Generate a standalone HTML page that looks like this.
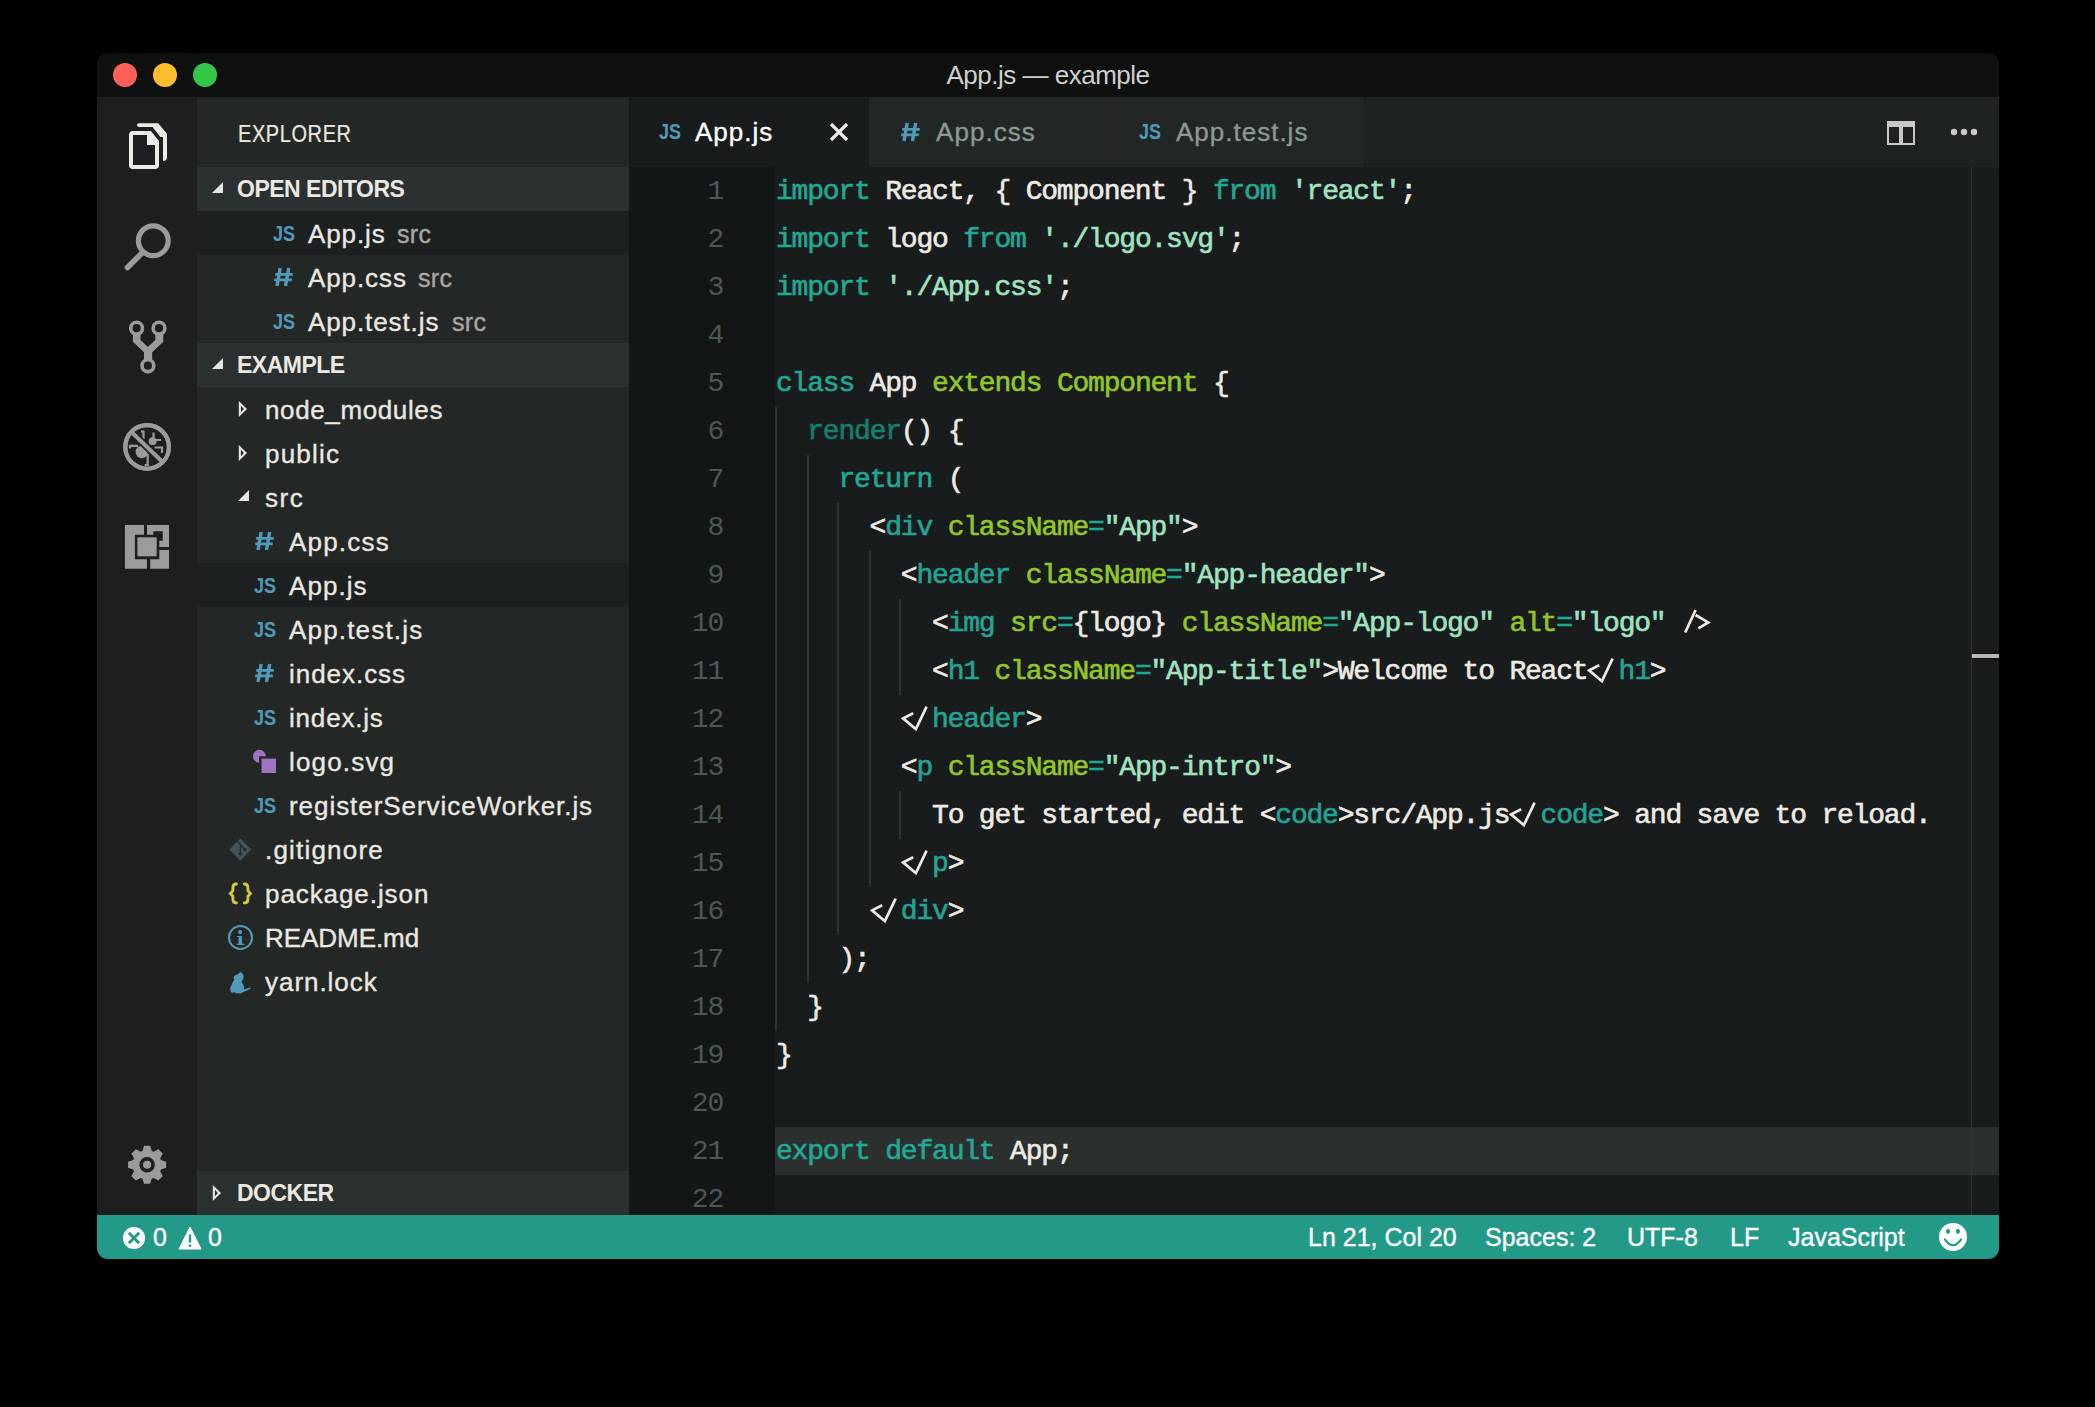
<!DOCTYPE html><html><head><meta charset="utf-8"><style>
*{margin:0;padding:0;box-sizing:border-box}
html,body{width:2095px;height:1407px;background:#000;overflow:hidden}
body{position:relative;font-family:"Liberation Sans",sans-serif;}
.a{position:absolute}
#win{position:absolute;left:0;top:0;width:2095px;height:1407px;clip-path:inset(53px 96px 148px 97px round 11px);background:#191c1c}
.ln{position:absolute;left:629px;width:94px;text-align:right;font-family:"Liberation Mono",monospace;font-size:28px;letter-spacing:-1.2px;line-height:48px;height:48px;color:#4d5856;white-space:pre}
.cl{position:absolute;left:776px;font-family:"Liberation Mono",monospace;font-size:28px;line-height:48px;height:48px;white-space:pre;color:#efebe5;letter-spacing:-1.2px;-webkit-text-stroke-width:0.6px}
.kw{color:#22a896} .tag{color:#25a394} .attr{color:#93c62a} .eq{color:#1fa894} .str{color:#a0e4c2} .cls{color:#93c62a} .fn{color:#157f6e}
.gd{position:absolute;width:2px;background:#2d3533}
.si{position:absolute;height:44px;line-height:46px;font-size:26px;color:#ece8e2;white-space:pre;letter-spacing:0.5px;-webkit-text-stroke-width:0.35px}
.desc{font-size:25px;color:#a8a8a6;letter-spacing:0.3px}
.sh{position:absolute;left:197px;width:432px;height:44px;background:#2b3030}
.sht{position:absolute;left:237px;height:44px;line-height:44px;font-size:23px;font-weight:bold;color:#ece8e2;letter-spacing:-0.5px}
.ic{position:absolute;font-weight:bold;color:#519aba;}
.st{position:absolute;top:1215px;height:44px;line-height:44px;font-size:25px;color:#fff;white-space:pre;-webkit-text-stroke-width:0.35px}
</style></head><body><div id="win">
<div class="a" style="left:0;top:53px;width:2095px;height:44px;background:#0e100f"></div>
<div class="a" style="left:113px;top:63px;width:24px;height:24px;border-radius:50%;background:#fe5f57"></div>
<div class="a" style="left:153px;top:63px;width:24px;height:24px;border-radius:50%;background:#febc2e"></div>
<div class="a" style="left:193px;top:63px;width:24px;height:24px;border-radius:50%;background:#33c748"></div>
<div class="a" style="left:848px;width:400px;top:53px;height:44px;line-height:44px;text-align:center;font-size:26px;color:#cfcfcf;letter-spacing:-0.5px">App.js — example</div>
<div class="a" style="left:97px;top:97px;width:100px;height:1118px;background:#1c1f1e"></div>
<div class="a" style="left:197px;top:97px;width:432px;height:1118px;background:#232827"></div>
<div class="a" style="left:629px;top:97px;width:1370px;height:70px;background:#1e2221"></div>
<div class="a" style="left:629px;top:167px;width:146px;height:1048px;background:#121616"></div>
<div class="a" style="left:775px;top:1127px;width:1224px;height:48px;background:#2b302f"></div>
<div class="a" style="left:1971px;top:167px;width:1px;height:1048px;background:#303534"></div>
<div class="a" style="left:1972px;top:653px;width:27px;height:6px;background:#0d0f0f"></div>
<div class="a" style="left:1972px;top:654px;width:27px;height:4px;background:#b9bab2"></div>
<div class="a" style="left:0;top:1215px;width:2095px;height:44px;background:#239a88"></div>
<svg class="a" style="left:107px;top:107px" width="80" height="80" viewBox="0 0 80 80"><path fill="#eceae4" fill-rule="evenodd" d="M26,24 H44 L52,34 V58 Q52,62 48,62 H26 Q22,62 22,58 V28 Q22,24 26,24 Z M26,28 V58 H48 V38 H40 V28 Z"/><path fill="#eceae4" d="M32,16.2 H51.2 L60,26.7 V50 Q60,54 56,54 V30.1 H53.4 L45.5,19.9 H32 Q30,19.9 30,18 Q30,16.2 32,16.2 Z"/></svg>
<svg class="a" style="left:107px;top:206px" width="80" height="80" viewBox="0 0 80 80"><circle cx="46.3" cy="34.7" r="14.9" fill="none" stroke="#9b9b99" stroke-width="5.2"/><line x1="20.5" y1="61.5" x2="35" y2="47" stroke="#9b9b99" stroke-width="5.6" stroke-linecap="round"/></svg>
<svg class="a" style="left:107px;top:306px" width="80" height="80" viewBox="0 0 80 80"><path fill="#9b9b99" d="M25.9,27.9 H33.5 V33.9 L40.9,40.9 L48.3,33.9 V27.9 H56.3 V35.7 L45.2,46.2 V53.4 H37 V46.2 L25.9,35.7 Z"/><circle cx="29.6" cy="22.2" r="5.9" fill="#1c1f1e" stroke="#9b9b99" stroke-width="3.6"/><circle cx="52" cy="22.2" r="5.9" fill="#1c1f1e" stroke="#9b9b99" stroke-width="3.6"/><circle cx="40.9" cy="59.7" r="5.9" fill="#1c1f1e" stroke="#9b9b99" stroke-width="3.6"/></svg>
<svg class="a" style="left:107px;top:406px" width="80" height="80" viewBox="0 0 80 80"><circle cx="40.1" cy="40.9" r="21.8" fill="none" stroke="#9b9b99" stroke-width="4.1"/><circle cx="34.8" cy="46" r="6.2" fill="#9b9b99"/><circle cx="45.6" cy="35.2" r="3.9" fill="#9b9b99"/><path fill="none" stroke="#9b9b99" stroke-width="2.2" d="M23,42.6 V39.8 H31 M40.7,48 V59 H37.7 M34,25.5 H36.5 V33 M46.5,26.5 V32 M48.5,34 H54 M47.5,41.5 H55 V47"/><line x1="25.5" y1="27" x2="54.5" y2="55" stroke="#1c1f1e" stroke-width="7.5"/><line x1="25.2" y1="26.7" x2="54.8" y2="55.3" stroke="#9b9b99" stroke-width="4"/><circle cx="40.1" cy="40.9" r="21.8" fill="none" stroke="#9b9b99" stroke-width="4.1"/></svg>
<svg class="a" style="left:107px;top:506px" width="80" height="80" viewBox="0 0 80 80"><path fill="#9b9b99" d="M17.9,19 H37 V28.7 H27.9 V53.2 H40 V62.8 H17.9 Z"/><path fill="#9b9b99" d="M40,19 H62 V40.9 H52.3 V34.7 H55.7 V25.3 H46.3 V28.7 H40 Z"/><path fill="#9b9b99" d="M52.3,44.1 H62 V62.8 H43.2 V53.2 H52.3 Z"/><rect x="30.4" y="31.3" width="19.3" height="19" fill="#9b9b99"/></svg>
<svg class="a" style="left:107px;top:1125px" width="80" height="80" viewBox="0 0 80 80"><path fill="#9b9b99" d="M35.35,26.00 L37.08,20.74 L43.12,20.74 L44.85,26.00 L46.50,26.68 L51.44,24.19 L55.71,28.46 L53.22,33.40 L53.90,35.05 L59.16,36.78 L59.16,42.82 L53.90,44.55 L53.22,46.20 L55.71,51.14 L51.44,55.41 L46.50,52.92 L44.85,53.60 L43.12,58.86 L37.08,58.86 L35.35,53.60 L33.70,52.92 L28.76,55.41 L24.49,51.14 L26.98,46.20 L26.30,44.55 L21.04,42.82 L21.04,36.78 L26.30,35.05 L26.98,33.40 L24.49,28.46 L28.76,24.19 L33.70,26.68Z"/><circle cx="40.1" cy="39.8" r="5.9" fill="none" stroke="#1c1f1e" stroke-width="3.7"/></svg>
<div class="a" style="left:238px;top:99px;height:70px;line-height:70px;font-size:23px;color:#ece8e2;letter-spacing:0.7px;transform:scaleX(0.868);transform-origin:0 0;-webkit-text-stroke-width:0.2px">EXPLORER</div>
<div class="sh" style="top:167px"></div>
<svg class="a" style="left:205px;top:167px" width="30" height="44" viewBox="0 0 30 44"><path fill="#e6e6e6" d="M7,26 L18,15 V26 Z"/></svg>
<div class="sht" style="top:167px">OPEN EDITORS</div>
<div class="sh" style="top:343px"></div>
<svg class="a" style="left:205px;top:343px" width="30" height="44" viewBox="0 0 30 44"><path fill="#e6e6e6" d="M7,26 L18,15 V26 Z"/></svg>
<div class="sht" style="top:343px">EXAMPLE</div>
<div class="sh" style="top:1171px"></div>
<svg class="a" style="left:205px;top:1171px" width="30" height="44" viewBox="0 0 30 44"><path fill="#e6e6e6" fill-rule="evenodd" d="M7.8,14 L16,22 L7.8,30 Z M9.9,18.7 L12.9,22 L9.9,25.3 Z"/></svg>
<div class="sht" style="top:1171px">DOCKER</div>
<div class="a" style="left:197px;top:211px;width:432px;height:44px;background:#1c2020"></div>
<div class="a" style="left:197px;top:563px;width:432px;height:44px;background:#1c2020"></div>
<svg class="a" style="left:272px;top:211px" width="28" height="44" viewBox="0 0 28 44"><text x="1" y="30" font-family="Liberation Sans" font-weight="bold" font-size="21.8" fill="#519aba" textLength="22" lengthAdjust="spacingAndGlyphs">JS</text></svg>
<div class="si" style="left:308px;top:211px;letter-spacing:0.9px">App.js</div>
<div class="si desc" style="left:397px;top:211px">src</div>
<svg class="a" style="left:272px;top:265.5px" width="24" height="22" viewBox="0 0 24 22"><g transform="translate(2,2)"><path stroke="#519aba" fill="none" stroke-width="3.4" d="M6.2,0 L3,18 M14.7,0 L11.5,18"/><path stroke="#519aba" fill="none" stroke-width="2.7" d="M1.2,6.3 H18.8 M0.2,11.8 H17.8"/></g></svg>
<div class="si" style="left:308px;top:255px;letter-spacing:0.9px">App.css</div>
<div class="si desc" style="left:418px;top:255px">src</div>
<svg class="a" style="left:272px;top:299px" width="28" height="44" viewBox="0 0 28 44"><text x="1" y="30" font-family="Liberation Sans" font-weight="bold" font-size="21.8" fill="#519aba" textLength="22" lengthAdjust="spacingAndGlyphs">JS</text></svg>
<div class="si" style="left:308px;top:299px;letter-spacing:0.9px">App.test.js</div>
<div class="si desc" style="left:452px;top:299px">src</div>
<svg class="a" style="left:233px;top:387px" width="20" height="44" viewBox="0 0 20 44"><path fill="#e6e6e6" fill-rule="evenodd" d="M5.8,14 L14,22 L5.8,30 Z M7.9,18.7 L10.9,22 L7.9,25.3 Z"/></svg>
<div class="si" style="left:265px;top:387px;letter-spacing:0.62px">node_modules</div>
<svg class="a" style="left:233px;top:431px" width="20" height="44" viewBox="0 0 20 44"><path fill="#e6e6e6" fill-rule="evenodd" d="M5.8,14 L14,22 L5.8,30 Z M7.9,18.7 L10.9,22 L7.9,25.3 Z"/></svg>
<div class="si" style="left:265px;top:431px;letter-spacing:1.2px">public</div>
<svg class="a" style="left:233px;top:475px" width="20" height="44" viewBox="0 0 20 44"><path fill="#e6e6e6" d="M5,26 L16,15 V26 Z"/></svg>
<div class="si" style="left:265px;top:475px;letter-spacing:1.5px">src</div>
<svg class="a" style="left:253px;top:529.5px" width="24" height="22" viewBox="0 0 24 22"><g transform="translate(2,2)"><path stroke="#519aba" fill="none" stroke-width="3.4" d="M6.2,0 L3,18 M14.7,0 L11.5,18"/><path stroke="#519aba" fill="none" stroke-width="2.7" d="M1.2,6.3 H18.8 M0.2,11.8 H17.8"/></g></svg>
<div class="si" style="left:289px;top:519px;letter-spacing:1.2px">App.css</div>
<svg class="a" style="left:253px;top:563px" width="28" height="44" viewBox="0 0 28 44"><text x="1" y="30" font-family="Liberation Sans" font-weight="bold" font-size="21.8" fill="#519aba" textLength="22" lengthAdjust="spacingAndGlyphs">JS</text></svg>
<div class="si" style="left:289px;top:563px;letter-spacing:1.04px">App.js</div>
<svg class="a" style="left:253px;top:607px" width="28" height="44" viewBox="0 0 28 44"><text x="1" y="30" font-family="Liberation Sans" font-weight="bold" font-size="21.8" fill="#519aba" textLength="22" lengthAdjust="spacingAndGlyphs">JS</text></svg>
<div class="si" style="left:289px;top:607px;letter-spacing:1.18px">App.test.js</div>
<svg class="a" style="left:253px;top:661.5px" width="24" height="22" viewBox="0 0 24 22"><g transform="translate(2,2)"><path stroke="#519aba" fill="none" stroke-width="3.4" d="M6.2,0 L3,18 M14.7,0 L11.5,18"/><path stroke="#519aba" fill="none" stroke-width="2.7" d="M1.2,6.3 H18.8 M0.2,11.8 H17.8"/></g></svg>
<div class="si" style="left:289px;top:651px;letter-spacing:0.96px">index.css</div>
<svg class="a" style="left:253px;top:695px" width="28" height="44" viewBox="0 0 28 44"><text x="1" y="30" font-family="Liberation Sans" font-weight="bold" font-size="21.8" fill="#519aba" textLength="22" lengthAdjust="spacingAndGlyphs">JS</text></svg>
<div class="si" style="left:289px;top:695px;letter-spacing:0.81px">index.js</div>
<svg class="a" style="left:245px;top:739px" width="40" height="44" viewBox="0 0 40 44"><path fill="#a074c4" d="M14.4,17.3 m-6.45,0 a6.45,6.45 0 1,1 12.9,0 H14.1 V23.75 A6.45,6.45 0 0,1 7.95,17.3 Z"/><rect x="16.5" y="19.6" width="14.5" height="14.4" fill="#a074c4"/></svg>
<div class="si" style="left:289px;top:739px;letter-spacing:1.17px">logo.svg</div>
<svg class="a" style="left:253px;top:783px" width="28" height="44" viewBox="0 0 28 44"><text x="1" y="30" font-family="Liberation Sans" font-weight="bold" font-size="21.8" fill="#519aba" textLength="22" lengthAdjust="spacingAndGlyphs">JS</text></svg>
<div class="si" style="left:289px;top:783px;letter-spacing:0.95px">registerServiceWorker.js</div>
<svg class="a" style="left:220px;top:827px" width="40" height="44" viewBox="0 0 40 44"><path fill="#41535b" stroke="#41535b" stroke-width="1.6" stroke-linejoin="round" d="M20.3,12.5 L30.3,22.5 L20.3,32.5 L10.3,22.5 Z"/><path fill="none" stroke="#232827" stroke-width="1.3" d="M16.6,13.6 L25,22.4 M20.7,17.9 L20.3,27"/><circle cx="25" cy="22.5" r="1.7" fill="#232827"/><circle cx="20.3" cy="27" r="1.6" fill="#232827"/></svg>
<div class="si" style="left:265px;top:827px;letter-spacing:1.2px">.gitignore</div>
<svg class="a" style="left:220px;top:871px" width="40" height="44" viewBox="0 0 40 44"><path fill="none" stroke="#cfcd3f" stroke-width="2.8" stroke-linecap="round" d="M16.5,13 Q12.9,13 12.9,16.5 V19.8 L10.4,22.5 L12.9,25.2 V28.5 Q12.9,32 16.5,32"/><path fill="none" stroke="#cfcd3f" stroke-width="2.8" stroke-linecap="round" d="M24.3,13 Q27.9,13 27.9,16.5 V19.8 L30.4,22.5 L27.9,25.2 V28.5 Q27.9,32 24.3,32"/></svg>
<div class="si" style="left:265px;top:871px;letter-spacing:0.92px">package.json</div>
<svg class="a" style="left:220px;top:915px" width="40" height="44" viewBox="0 0 40 44"><circle cx="20.5" cy="22.5" r="11.5" fill="none" stroke="#519aba" stroke-width="2.1"/><circle cx="20.1" cy="17.1" r="2.05" fill="#519aba"/><path fill="#519aba" d="M16.8,20.9 H22 V28.7 H24.2 V30.1 H16.8 V28.7 H18.6 V21.9 H16.8 Z"/></svg>
<div class="si" style="left:265px;top:915px;letter-spacing:-0.05px">README.md</div>
<svg class="a" style="left:220px;top:959px" width="40" height="44" viewBox="0 0 40 44"><path fill="#519aba" transform="translate(0,2)" d="M20.5,10.8 L23.3,13.4 L23.6,17.1 L21.6,21 L23.6,24.2 L24.2,28.4 L29.9,26.4 L31,27.4 L24.2,30.7 L20.5,32.4 L15.4,32.1 L14.2,31 L13.4,31.8 L10.8,31.3 L10.1,27.3 L12.2,22.2 L14.2,18.8 L13.6,16.5 L14.5,14.8 L18.5,12.8 Z"/></svg>
<div class="si" style="left:265px;top:959px;letter-spacing:0.96px">yarn.lock</div>
<div class="a" style="left:629px;top:97px;width:240px;height:70px;background:#191c1c"></div>
<div class="a" style="left:869px;top:97px;width:239px;height:70px;background:#222726"></div>
<div class="a" style="left:1109px;top:97px;width:255px;height:70px;background:#222726"></div>
<div class="a" style="left:1108px;top:97px;width:1px;height:70px;background:#262222"></div>
<div class="a" style="left:1364px;top:97px;width:1px;height:70px;background:#1c1f1f"></div>
<svg class="a" style="left:658px;top:109px" width="28" height="44" viewBox="0 0 28 44"><text x="1" y="30" font-family="Liberation Sans" font-weight="bold" font-size="21.8" fill="#519aba" textLength="22" lengthAdjust="spacingAndGlyphs">JS</text></svg>
<div class="a" style="left:695px;top:97px;height:70px;line-height:70px;font-size:26px;color:#ffffff;letter-spacing:1.0px;-webkit-text-stroke-width:0.35px">App.js</div>
<svg class="a" style="left:826px;top:119px" width="26" height="26" viewBox="0 0 26 26"><path d="M5,5 L21,21 M21,5 L5,21" stroke="#eaeaea" stroke-width="3.2"/></svg>
<svg class="a" style="left:899.2px;top:120.5px" width="24" height="22" viewBox="0 0 24 22"><g transform="translate(2,2)"><path stroke="#519aba" fill="none" stroke-width="3.4" d="M6.2,0 L3,18 M14.7,0 L11.5,18"/><path stroke="#519aba" fill="none" stroke-width="2.7" d="M1.2,6.3 H18.8 M0.2,11.8 H17.8"/></g></svg>
<div class="a" style="left:936px;top:97px;height:70px;line-height:70px;font-size:26px;color:#8b9993;letter-spacing:1.05px;-webkit-text-stroke-width:0.35px">App.css</div>
<svg class="a" style="left:1138px;top:109px" width="28" height="44" viewBox="0 0 28 44"><text x="1" y="30" font-family="Liberation Sans" font-weight="bold" font-size="21.8" fill="#519aba" textLength="22" lengthAdjust="spacingAndGlyphs">JS</text></svg>
<div class="a" style="left:1176px;top:97px;height:70px;line-height:70px;font-size:26px;color:#8b9993;letter-spacing:1.0px;-webkit-text-stroke-width:0.35px">App.test.js</div>
<svg class="a" style="left:1887px;top:121px" width="28" height="24" viewBox="0 0 28 24"><path fill="#c8c8c8" fill-rule="evenodd" d="M0,0 H28 V24 H0 Z M2,6 V22 H12 V6 Z M16,6 V22 H26 V6 Z"/></svg>
<svg class="a" style="left:1945px;top:125px" width="36" height="14" viewBox="0 0 36 14"><circle cx="9" cy="7" r="3.2" fill="#c8c8c8"/><circle cx="19" cy="7" r="3.2" fill="#c8c8c8"/><circle cx="29" cy="7" r="3.2" fill="#c8c8c8"/></svg>
<div class="gd" style="left:775px;top:407px;height:624px"></div>
<div class="gd" style="left:807px;top:455px;height:528px"></div>
<div class="gd" style="left:837px;top:503px;height:432px"></div>
<div class="gd" style="left:869px;top:551px;height:336px"></div>
<div class="gd" style="left:899px;top:599px;height:96px"></div>
<div class="gd" style="left:899px;top:791px;height:48px"></div>
<div class="ln" style="top:168px">1</div>
<div class="cl" style="top:168px"><span class="kw">import</span> React, { Component } <span class="kw">from</span> <span class="str">'react'</span>;</div>
<div class="ln" style="top:216px">2</div>
<div class="cl" style="top:216px"><span class="kw">import</span> logo <span class="kw">from</span> <span class="str">'./logo.svg'</span>;</div>
<div class="ln" style="top:264px">3</div>
<div class="cl" style="top:264px"><span class="kw">import</span> <span class="str">'./App.css'</span>;</div>
<div class="ln" style="top:312px">4</div>
<div class="ln" style="top:360px">5</div>
<div class="cl" style="top:360px"><span class="kw">class</span> App <span class="cls">extends</span> <span class="cls">Component</span> {</div>
<div class="ln" style="top:408px">6</div>
<div class="cl" style="top:408px">  <span class="fn">render</span>() {</div>
<div class="ln" style="top:456px">7</div>
<div class="cl" style="top:456px">    <span class="kw">return</span> (</div>
<div class="ln" style="top:504px">8</div>
<div class="cl" style="top:504px">      &lt;<span class="tag">div</span> <span class="attr">className</span><span class="eq">=</span><span class="str">"App"</span>&gt;</div>
<div class="ln" style="top:552px">9</div>
<div class="cl" style="top:552px">        &lt;<span class="tag">header</span> <span class="attr">className</span><span class="eq">=</span><span class="str">"App-header"</span>&gt;</div>
<div class="ln" style="top:600px">10</div>
<div class="cl" style="top:600px">          &lt;<span class="tag">img</span> <span class="attr">src</span><span class="eq">=</span>{logo} <span class="attr">className</span><span class="eq">=</span><span class="str">"App-logo"</span> <span class="attr">alt</span><span class="eq">=</span><span class="str">"logo"</span> <span style="display:inline-block;width:31.2px;height:48px;vertical-align:top;position:relative"><svg style="position:absolute;left:0;top:-1px" width="32" height="48" viewBox="0 0 32 48"><path fill="none" stroke="#efebe5" stroke-width="2.7" stroke-linejoin="miter" stroke-linecap="butt" d="M4.2,33.5 L14.6,11 M14.6,16 L27.2,23.4 L17.4,29.3"/></svg></span></div>
<div class="ln" style="top:648px">11</div>
<div class="cl" style="top:648px">          &lt;<span class="tag">h1</span> <span class="attr">className</span><span class="eq">=</span><span class="str">"App-title"</span>&gt;Welcome to React<span style="display:inline-block;width:31.2px;height:48px;vertical-align:top;position:relative"><svg style="position:absolute;left:0;top:-1px" width="32" height="48" viewBox="0 0 32 48"><path fill="none" stroke="#efebe5" stroke-width="2.7" stroke-linejoin="miter" stroke-linecap="butt" d="M12.2,18.2 L2.1,23.4 L14.9,34.2 L25.6,11.6"/></svg></span><span class="tag">h1</span>&gt;</div>
<div class="ln" style="top:696px">12</div>
<div class="cl" style="top:696px">        <span style="display:inline-block;width:31.2px;height:48px;vertical-align:top;position:relative"><svg style="position:absolute;left:0;top:-1px" width="32" height="48" viewBox="0 0 32 48"><path fill="none" stroke="#efebe5" stroke-width="2.7" stroke-linejoin="miter" stroke-linecap="butt" d="M12.2,18.2 L2.1,23.4 L14.9,34.2 L25.6,11.6"/></svg></span><span class="tag">header</span>&gt;</div>
<div class="ln" style="top:744px">13</div>
<div class="cl" style="top:744px">        &lt;<span class="tag">p</span> <span class="attr">className</span><span class="eq">=</span><span class="str">"App-intro"</span>&gt;</div>
<div class="ln" style="top:792px">14</div>
<div class="cl" style="top:792px">          To get started, edit &lt;<span class="tag">code</span>&gt;src/App.js<span style="display:inline-block;width:31.2px;height:48px;vertical-align:top;position:relative"><svg style="position:absolute;left:0;top:-1px" width="32" height="48" viewBox="0 0 32 48"><path fill="none" stroke="#efebe5" stroke-width="2.7" stroke-linejoin="miter" stroke-linecap="butt" d="M12.2,18.2 L2.1,23.4 L14.9,34.2 L25.6,11.6"/></svg></span><span class="tag">code</span>&gt; and save to reload.</div>
<div class="ln" style="top:840px">15</div>
<div class="cl" style="top:840px">        <span style="display:inline-block;width:31.2px;height:48px;vertical-align:top;position:relative"><svg style="position:absolute;left:0;top:-1px" width="32" height="48" viewBox="0 0 32 48"><path fill="none" stroke="#efebe5" stroke-width="2.7" stroke-linejoin="miter" stroke-linecap="butt" d="M12.2,18.2 L2.1,23.4 L14.9,34.2 L25.6,11.6"/></svg></span><span class="tag">p</span>&gt;</div>
<div class="ln" style="top:888px">16</div>
<div class="cl" style="top:888px">      <span style="display:inline-block;width:31.2px;height:48px;vertical-align:top;position:relative"><svg style="position:absolute;left:0;top:-1px" width="32" height="48" viewBox="0 0 32 48"><path fill="none" stroke="#efebe5" stroke-width="2.7" stroke-linejoin="miter" stroke-linecap="butt" d="M12.2,18.2 L2.1,23.4 L14.9,34.2 L25.6,11.6"/></svg></span><span class="tag">div</span>&gt;</div>
<div class="ln" style="top:936px">17</div>
<div class="cl" style="top:936px">    );</div>
<div class="ln" style="top:984px">18</div>
<div class="cl" style="top:984px">  }</div>
<div class="ln" style="top:1032px">19</div>
<div class="cl" style="top:1032px">}</div>
<div class="ln" style="top:1080px">20</div>
<div class="ln" style="top:1128px">21</div>
<div class="cl" style="top:1128px"><span class="kw">export</span> <span class="kw">default</span> App;</div>
<div class="ln" style="top:1176px">22</div>
<svg class="a" style="left:122px;top:1226px" width="24" height="24" viewBox="0 0 24 24"><circle cx="12" cy="12" r="11.1" fill="#fff"/><path d="M6.8,6.8 L17.2,17.2 M17.2,6.8 L6.8,17.2" stroke="#239a88" stroke-width="3"/></svg>
<div class="st" style="left:153px">0</div>
<svg class="a" style="left:178px;top:1226px" width="24" height="24" viewBox="0 0 24 24"><path d="M12,1 L23,23 H1 Z" fill="#fff" stroke="#fff" stroke-width="1" stroke-linejoin="round"/><rect x="10.8" y="8.5" width="2.4" height="8" fill="#239a88"/><rect x="10.8" y="18.5" width="2.4" height="2.4" fill="#239a88"/></svg>
<div class="st" style="left:208px">0</div>
<div class="st" style="left:1308px">Ln 21, Col 20</div>
<div class="st" style="left:1485px">Spaces: 2</div>
<div class="st" style="left:1627px">UTF-8</div>
<div class="st" style="left:1730px">LF</div>
<div class="st" style="left:1788px">JavaScript</div>
<svg class="a" style="left:1938px;top:1222px" width="30" height="30" viewBox="0 0 30 30"><circle cx="15" cy="15" r="14" fill="#fff"/><ellipse cx="10" cy="9.3" rx="2" ry="2.6" fill="#239a88"/><ellipse cx="19.9" cy="9.3" rx="2" ry="2.6" fill="#239a88"/><path d="M6.9,17.4 Q15,29.2 23.1,17.4" fill="none" stroke="#239a88" stroke-width="2" stroke-linecap="round"/></svg>
</div></body></html>
